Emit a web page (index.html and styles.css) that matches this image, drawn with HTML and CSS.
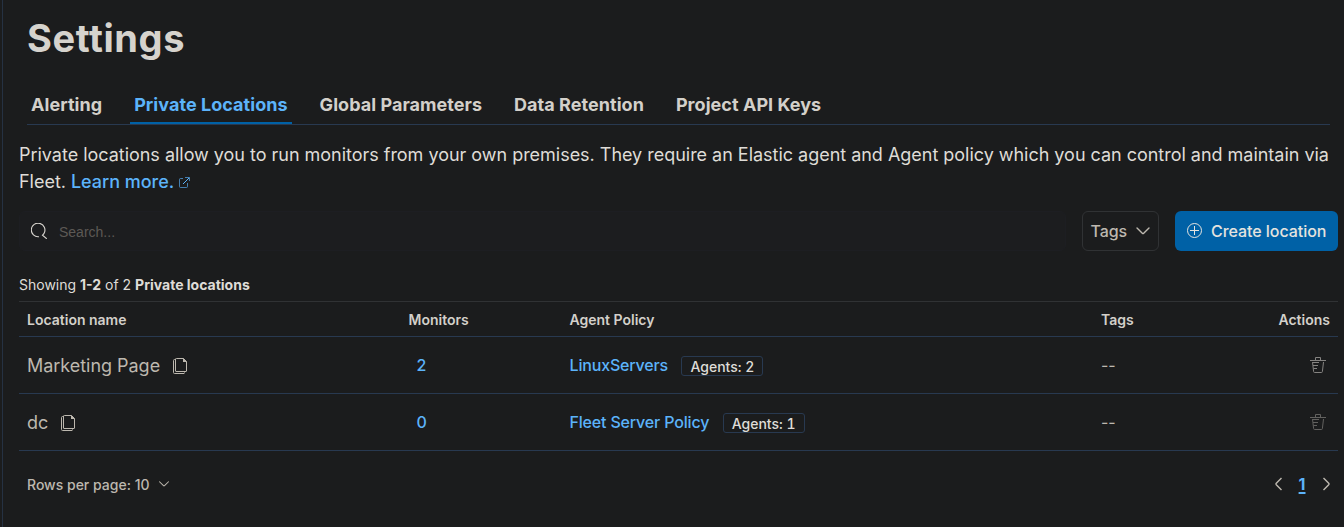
FILE: index.html
```html
<!DOCTYPE html>
<html lang="en">
<head>
<meta charset="utf-8">
<title>Settings</title>
<link rel="stylesheet" href="styles.css">
</head>
<body>
<svg class="defs" width="0" height="0" aria-hidden="true">
  <symbol id="copy" viewBox="0 0 16 16"><path d="M3.500 1.500H2.500Q1.500 1.500 1.500 2.500V14.500Q1.500 15.500 2.500 15.500H12Q12.500 15.500 12.500 14.500" fill="none" stroke="currentColor"/><path d="M4.500 .5H11.500L14.500 3.500V13Q14.500 13.500 14 13.500H4Q3.500 13.500 3.500 13V1Q3.500 .5 4.500 .5Z" fill="none" stroke="currentColor"/><path d="M11 0L15 4H11Z" fill="currentColor"/></symbol>
  <symbol id="trash" viewBox="0 0 16 16"><path d="M0 3.500H16M5.500 3V.5H10.500V3M2.500 5L3.600 14.500Q3.700 15.500 4.500 15.500H11.500Q12.300 15.500 12.400 14.500L13.500 5M3 5.500H9M3 8.500H8M3.500 11.500H7" fill="none" stroke="currentColor"/></symbol>
  <symbol id="down" viewBox="0 0 16 16"><path d="M2 5L7.300 10.300Q8 11 8.700 10.300L14 5" fill="none" stroke="currentColor" stroke-width="1.400" stroke-linecap="round"/></symbol>
</svg>
<main class="page">
  <h1 class="title">Settings</h1>
  <nav class="tabs">
    <a class="tab">Alerting</a>
    <a class="tab tab-active">Private Locations</a>
    <a class="tab">Global Parameters</a>
    <a class="tab">Data Retention</a>
    <a class="tab">Project API Keys</a>
  </nav>
  <p class="intro">Private locations allow you to run monitors from your own premises. They require an Elastic agent and Agent policy which you can control and maintain via Fleet. <a class="link">Learn more.<svg class="external" viewBox="0 0 12 12"><path class="faint" d="M5 2.500H2.500Q1.500 2.500 1.500 3.500V10.500Q1.500 11.500 2.500 11.500H8.500Q9.500 11.500 9.500 10.500V7"/><path class="faint" d="M7 1.500H11.500V5"/><path d="M5 8L11 2"/></svg></a></p>
  <div class="toolbar">
    <div class="search">
      <svg class="i16" viewBox="0 0 16 16"><path d="M8 13.700A6.800 6.800 0 1 1 13.200 10Q12.700 11.200 11.500 12.200L15.800 15.800" fill="none" stroke="currentColor" stroke-width="1.100"/></svg>
      <span>Search...</span>
    </div>
    <button class="filter">Tags <svg class="i16"><use href="#down"/></svg></button>
    <button class="create"><svg class="i16" viewBox="0 0 16 16"><circle cx="7.500" cy="7.500" r="7" fill="none" stroke="currentColor"/><path d="M7.500 3V12M3 7.500H12" stroke="currentColor"/></svg>Create location</button>
  </div>
  <p class="count">Showing <b>1-2</b> of 2 <b>Private locations</b></p>
  <section class="table">
    <div class="row head"><span>Location name</span><span class="mon">Monitors</span><span>Agent Policy</span><span>Tags</span><span class="act">Actions</span></div>
    <div class="row"><span class="name">Marketing Page<svg class="i16"><use href="#copy"/></svg></span><a class="num">2</a><span class="policy"><a>LinuxServers</a><span class="badge">Agents: 2</span></span><span class="none">--</span><span class="act"><svg class="i16 trash"><use href="#trash"/></svg></span></div>
    <div class="row"><span class="name">dc<svg class="i16"><use href="#copy"/></svg></span><a class="num">0</a><span class="policy"><a>Fleet Server Policy</a><span class="badge">Agents: 1</span></span><span class="none">--</span><span class="act"><svg class="i16 trash dim"><use href="#trash"/></svg></span></div>
  </section>
  <footer class="footer">
    <span class="per">Rows per page: 10 <svg class="i12"><use href="#down"/></svg></span>
    <span class="pager"><svg class="arrow" viewBox="0 0 8 14"><path d="M6.500 1L1.300 6.300Q.7 7 1.300 7.700L6.500 13"/></svg><b>1</b><svg class="arrow" viewBox="0 0 8 14"><path d="M1.500 1L6.700 6.300Q7.300 7 6.700 7.700L1.500 13"/></svg></span>
  </footer>
</main>
</body>
</html>
```
FILE: styles.css
```css
* { box-sizing: border-box; }
body { margin: 0; height: 527px; overflow: hidden; background: #1b1c1d; color: #dfdcd7; font-family: Inter, sans-serif; }
.defs { display: block; }
.page { margin-left: 2px; height: 527px; border-left: 1px solid #253142; padding: 15px 6px 0 16px; }
.title { margin: 0 0 0 8px; font-size: 38px; line-height: 46px; font-weight: 700; letter-spacing: .6px; color: #d6d3cd; }
.tabs { display: flex; gap: 24px; height: 64px; margin: 0 8px; padding: 24px 0 0 0; border-bottom: 1px solid #283950; color: #d3d0ca; }
.tab { height: 39px; padding: 0 4px; font-size: 18px; line-height: 39px; font-weight: 700; letter-spacing: .045px; }
.tab-active { color: #5cb3fa; border-bottom: 2px solid #0061a6; }
.intro { margin: 16px 0 0; font-size: 18px; line-height: 27px; letter-spacing: -.022px; }
.link { color: #5cb3fa; font-weight: 500; }
.external { width: 12px; height: 12px; margin-left: 4px; fill: none; stroke: currentColor; vertical-align: 0; }
.faint { opacity: .65; }
.toolbar { display: flex; gap: 16px; height: 40px; margin-top: 16px; }
.search { flex: 1; display: flex; align-items: center; gap: 12px; padding-left: 12px; background: #1c1d1f; border: 1px solid #1d1e22; border-radius: 6px; font: 14px "Liberation Sans", sans-serif; color: #5c5955; }
.search span { padding-top: 2px; }
.search svg { color: #d8d5cf; margin-left: -1px; }
.i16 { width: 16px; height: 16px; flex: none; }
.i12 { width: 12px; height: 12px; }
button { display: flex; align-items: center; font: 500 16px Inter, sans-serif; letter-spacing: -.05px; border-radius: 6px; padding: 0; }
.filter { width: 77px; gap: 8px; padding-left: 7.500px; background: transparent; border: 1px solid #303234; color: #bdb8af; }
.create { width: 163px; gap: 8px; padding-left: 12px; border: 0; background: #0061a6; color: #e5e3df; }
.count { margin: 25px 0 7px; font-size: 14px; line-height: 18px; }
.count b { font-weight: 700; }
.table { border-top: 1px solid #303234; }
.row { display: grid; grid-template-columns: 374px 168.500px 531.500px 1fr auto; align-items: center; height: 57px; padding: 0 8px; border-bottom: 1px solid #283950; color: #bdb8af; }
.head { height: 35px; font-size: 14px; font-weight: 600; color: #d3d0ca; }
.head .mon { padding-left: 7.500px; }
.name { display: flex; align-items: center; gap: 12px; font-size: 18px; letter-spacing: -.03px; }
.name svg { margin: 1px 0 0 -.5px; }
.num, .policy a { color: #5cb3fa; font-size: 16px; font-weight: 500; }
.num { padding-left: 15.500px; }
.policy { display: flex; align-items: center; }
.policy a { letter-spacing: -.17px; }
.badge { margin: 2px 0 0 13.500px; height: 20px; padding: 0 8px; border: 1px solid #283950; border-radius: 3px; font-size: 14px; line-height: 19px; font-weight: 500; font-variant-numeric: tabular-nums; color: #dfdcd7; }
.none { font-size: 16px; }
.trash { display: block; margin-right: 4px; color: #858381; }
.dim { color: #62615f; }
.footer { display: flex; align-items: center; justify-content: space-between; height: 66px; padding: 0 8px; color: #bdb8af; }
.per { display: flex; align-items: center; gap: 9px; font-size: 14px; font-weight: 500; }
.pager { display: flex; align-items: center; gap: 16px; margin-right: .5px; }
.pager b { color: #5cb3fa; font-size: 16px; text-decoration: underline; text-decoration-thickness: 2px; text-underline-offset: 2px; }
.arrow { width: 8px; height: 14px; fill: none; stroke: currentColor; stroke-width: 1.4; }
```
